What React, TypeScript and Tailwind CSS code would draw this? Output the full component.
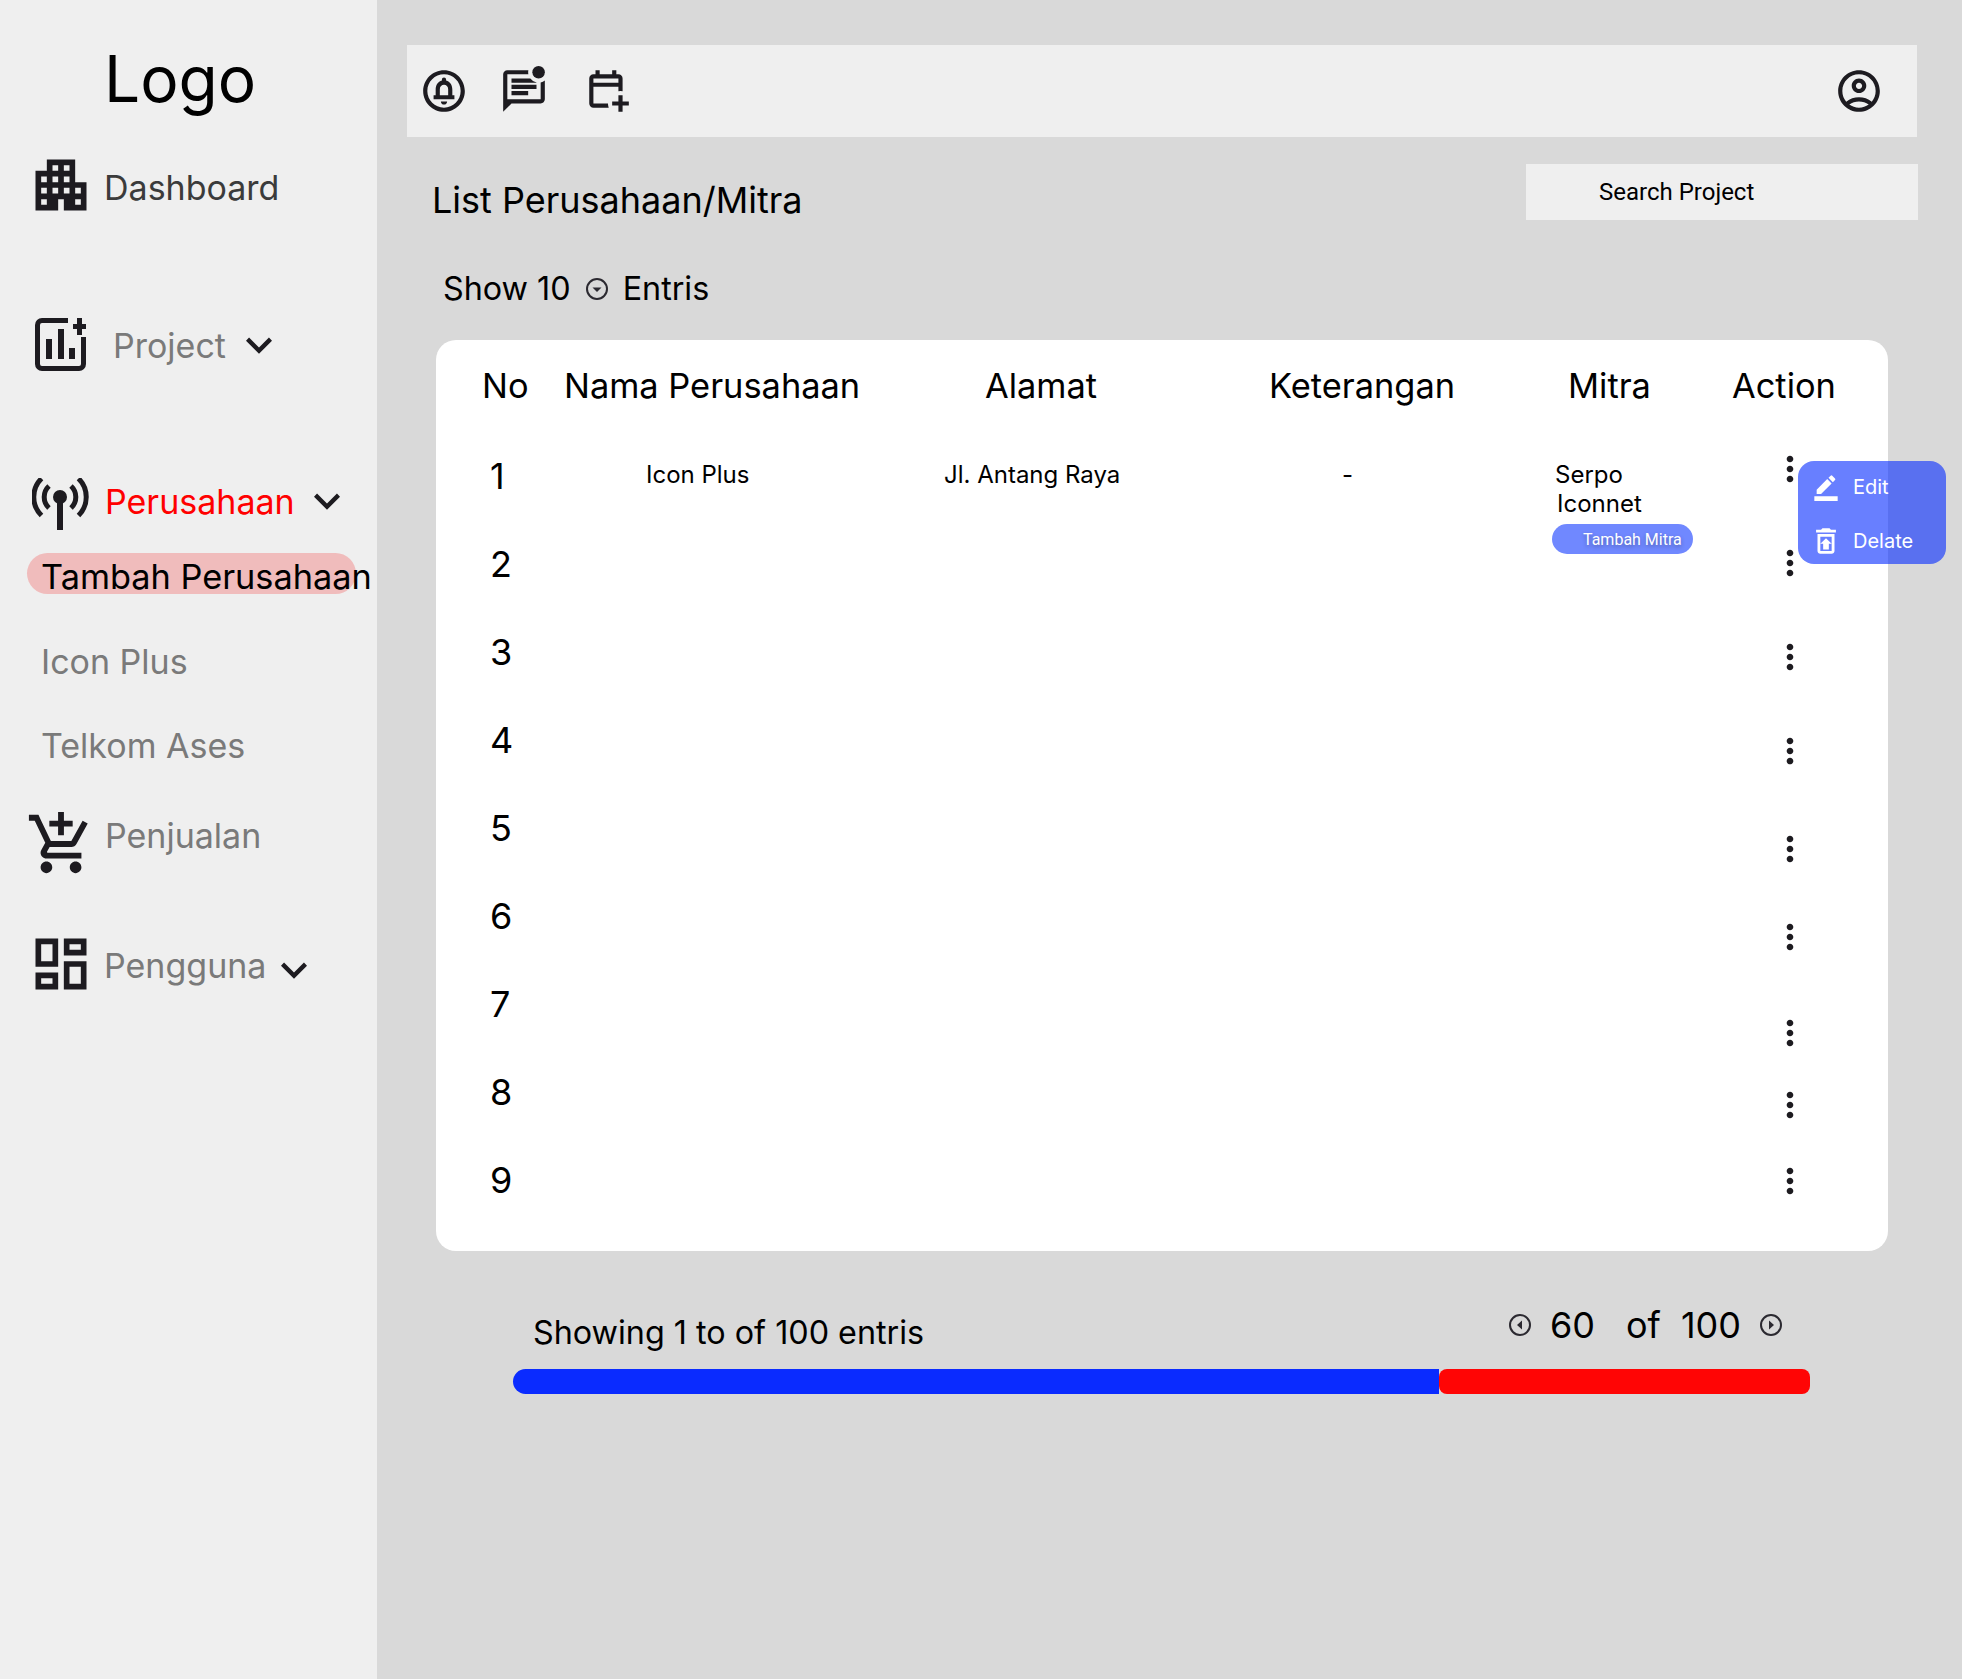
import {
  MdApartment,
  MdAddShoppingCart,
  MdOutlineDashboard,
  MdOutlineCircleNotifications,
  MdOutlineMarkUnreadChatAlt,
  MdOutlineAccountCircle,
  MdKeyboardArrowDown,
  MdMoreVert,
  MdBorderColor,
  MdOutlineRestoreFromTrash,
} from 'react-icons/md';

const actionMargins = [
  'mt-[38px]',
  'mt-[54px]',
  'mt-[54px]',
  'mt-[54px]',
  'mt-[58px]',
  'mt-[48px]',
  'mt-[56px]',
  'mt-[32px]',
  'mt-[36px]',
];

function CalendarAdd() {
  return (
    <svg viewBox="0 -960 960 960" className="w-[50px] h-[50px]" fill="#1d1b20">
      <path d="M680-80v-120H560v-80h120v-120h80v120h120v80H760v120h-80Zm-480-80q-33 0-56.5-23.5T120-240v-480q0-33 23.5-56.5T200-800h40v-80h80v80h240v-80h80v80h40q33 0 56.5 23.5T760-720v244q-20-3-40-3t-40 3v-84H200v320h280q0 20 3 40t11 40H200Zm0-480h480v-80H200v80Zm0 0v-80 80Z" />
    </svg>
  );
}

function ChartAdd() {
  return (
    <svg viewBox="0 0 51 53" className="w-[51px] h-[53px]" fill="#1d1b20">
      <path
        d="M33 2.5H7a4.5 4.5 0 0 0-4.5 4.5v39a4.5 4.5 0 0 0 4.5 4.5h37a4.5 4.5 0 0 0 4.5-4.5V19"
        fill="none"
        stroke="#1d1b20"
        strokeWidth="5"
      />
      <rect x="42" y="0" width="5" height="17" />
      <rect x="38" y="6" width="13" height="5" />
      <rect x="11" y="21" width="6" height="20" />
      <rect x="23" y="11" width="6" height="30" />
      <rect x="34" y="30" width="6" height="11" />
    </svg>
  );
}

function Antenna() {
  return (
    <svg viewBox="0 0 57 52" className="w-[57px] h-[52px]" fill="none" stroke="#1d1b20" strokeWidth="5">
      <circle cx="28" cy="19" r="7" fill="#1d1b20" stroke="none" />
      <rect x="25" y="20" width="6" height="32" fill="#1d1b20" stroke="none" />
      <path d="M17 8a15 15 0 0 0 0 22M39 8a15 15 0 0 1 0 22" />
      <path d="M9.5 0.5a26 26 0 0 0 0 37M46.5 0.5a26 26 0 0 1 0 37" />
    </svg>
  );
}

function CircleArrow({ dir }: { dir: 'down' | 'left' | 'right' }) {
  const tri = dir === 'down' ? 'M7.5 10.5h9L12 15z' : dir === 'left' ? 'M14 7.5v9L9 12z' : 'M10 7.5v9l5-4.5z';
  return (
    <svg viewBox="0 0 24 24" className="w-6 h-6 shrink-0">
      <circle cx="12" cy="12" r="10" fill="none" stroke="#2b2930" strokeWidth="2" />
      <path d={tri} fill="#2b2930" />
    </svg>
  );
}

function Sidebar() {
  return (
    <aside className="w-[377px] shrink-0 h-full bg-[#efefef] pt-[47px] font-['Inter',sans-serif] text-[34px] text-[#7a7a7a]">
      <div className="pl-[104px] h-[64px] text-[64px] leading-none text-black">Logo</div>

      <div className="mt-[40px] h-[68px] flex items-center pl-[27px]">
        <MdApartment className="w-[68px] h-[68px] text-[#1d1b20]" />
        <span className="ml-[9px] mt-1 text-[#3b3b3b]">Dashboard</span>
      </div>

      <div className="mt-[91px] h-[68px] flex items-center pl-[35px]">
        <ChartAdd />
        <span className="ml-[27px] mt-0.5">Project</span>
        <MdKeyboardArrowDown className="w-[52px] h-[52px] ml-[7px] mt-0.5 text-[#1d1b20]" />
      </div>

      <div className="mt-[92px] h-[68px] flex items-center pl-[32px]">
        <Antenna />
        <span className="ml-[16px] -mt-1.5 text-[#ff0000]">Perusahaan</span>
        <MdKeyboardArrowDown className="w-[52px] h-[52px] ml-[6px] -mt-1.5 text-[#1d1b20]" />
      </div>

      <div className="mt-[15px] ml-[27px] w-[329px] h-[41px] rounded-full bg-[#f0bcbc] pl-[14px] pt-[7px] flex items-center text-[34.3px] text-black whitespace-nowrap">
        Tambah Perusahaan
      </div>
      <div className="mt-[46px] ml-[41px] h-[44px] leading-[44px]">Icon Plus</div>
      <div className="mt-[40px] ml-[41px] h-[44px] leading-[44px]">Telkom Ases</div>

      <div className="mt-[41px] h-[70px] flex items-center pl-[26px]">
        <MdAddShoppingCart className="w-[70px] h-[70px] text-[#1d1b20]" />
        <span className="ml-[9px] -mt-[18px]">Penjualan</span>
      </div>

      <div className="mt-[51px] h-[68px] flex items-center pl-[27px]">
        <MdOutlineDashboard className="w-[68px] h-[68px] text-[#1d1b20]" />
        <span className="ml-[9px] mt-0.5">Pengguna</span>
        <MdKeyboardArrowDown className="w-[52px] h-[52px] ml-[2px] mt-3 text-[#1d1b20]" />
      </div>
    </aside>
  );
}

function ProjectTable() {
  return (
    <div className="relative ml-[59px] mt-[31px] w-[1452px] h-[911px] rounded-[20px] bg-white pt-[20px] text-black">
      <div className="grid grid-cols-[128px_421px_284px_299px_164px_156px] h-[48px] items-center text-[34.4px]">
        <span className="pl-[46px]">No</span>
        <span>Nama Perusahaan</span>
        <span>Alamat</span>
        <span>Keterangan</span>
        <span>Mitra</span>
        <span>Action</span>
      </div>

      <div className="flex mt-[3px]">
        <div className="w-[210px] mt-[21px] pl-[54px]">
          {[1, 2, 3, 4, 5, 6, 7, 8, 9].map((n) => (
            <div key={n} className="h-[88px] flex items-center text-[36px]">
              {n}
            </div>
          ))}
        </div>
        <div className="w-[298px] mt-[49px] text-[24px] leading-[29px]">Icon Plus</div>
        <div className="w-[398px] mt-[49px] text-[24px] leading-[29px]">Jl. Antang Raya</div>
        <div className="w-[213px] mt-[49px] text-[24px] leading-[29px]">-</div>
        <div className="w-[215px] mt-[49px] text-[24px] leading-[29px]">
          <div>Serpo</div>
          <div className="pl-0.5">Iconnet</div>
          <div className="mt-[6px] -ml-[3px] w-[141px] h-[30px] rounded-full bg-[#7088ff] pl-[31px] flex items-center font-['Roboto',sans-serif] text-[16px] text-white [text-shadow:0_2px_4px_rgba(0,0,0,0.3)]">
            Tambah Mitra
          </div>
        </div>
        <div className="flex flex-col">
          {actionMargins.map((m, i) => (
            <MdMoreVert key={i} className={`w-[40px] h-[40px] text-[#1d1b20] ${m}`} />
          ))}
        </div>
      </div>

      <div className="absolute left-[1362px] top-[121px] w-[148px] h-[103px] rounded-[16px] bg-[#0429ff]/60 text-white text-[20px]">
        <div className="flex items-center h-[50px] pl-[14px] pt-[2px]">
          <MdBorderColor className="w-[28px] h-[28px]" />
          <span className="ml-[13px]">Edit</span>
        </div>
        <div className="flex items-center h-[53px] pl-[11px] pt-[7px]">
          <MdOutlineRestoreFromTrash className="w-[34px] h-[34px]" />
          <span className="ml-[10px]">Delate</span>
        </div>
      </div>
    </div>
  );
}

export default function App() {
  return (
    <div className="flex w-[1962px] h-[1679px] bg-[#d9d9d9] font-['Inter',sans-serif] overflow-hidden">
      <Sidebar />
      <main className="flex-1 pt-[45px]">
        <div className="ml-[30px] w-[1510px] h-[92px] bg-[#efefef] flex items-center pl-[12px] pr-[33px] text-[#1d1b20]">
          <MdOutlineCircleNotifications className="w-[50px] h-[50px]" />
          <MdOutlineMarkUnreadChatAlt className="w-[50px] h-[50px] ml-[30px]" />
          <div className="ml-[34px]">
            <CalendarAdd />
          </div>
          <MdOutlineAccountCircle className="w-[50px] h-[50px] ml-auto" />
        </div>

        <div className="mt-[27px] ml-[55px] w-[1486px] h-[56px] flex justify-between text-black">
          <h1 className="text-[36px] leading-[44px] mt-[14px] font-normal">List Perusahaan/Mitra</h1>
          <div className="w-[392px] h-[56px] bg-[#efefef] pl-[73px] flex items-center font-['Roboto',sans-serif] text-[24px]">
            Search Project
          </div>
        </div>

        <div className="mt-[49px] ml-[66px] h-[40px] flex items-center text-[32.3px] text-black">
          <span>Show 10</span>
          <div className="ml-[14px]">
            <CircleArrow dir="down" />
          </div>
          <span className="ml-[14px]">Entris</span>
        </div>

        <ProjectTable />

        <div className="mt-[52px] ml-[156px] w-[1297px] h-[52px] flex text-black">
          <span className="text-[32.3px] mt-[6px]">Showing 1 to of 100 entris</span>
          <div className="ml-auto mr-[47px] flex items-center h-[44px] text-[36px]">
            <CircleArrow dir="left" />
            <span className="ml-[18px]">60</span>
            <span className="ml-[31px]">of</span>
            <span className="ml-[20px]">100</span>
            <div className="ml-[18px]">
              <CircleArrow dir="right" />
            </div>
          </div>
        </div>
        <div className="mt-[14px] ml-[136px] w-[1297px] h-[25px] flex">
          <div className="w-[926px] h-full bg-[#0a2bff] rounded-l-full" />
          <div className="flex-1 h-full bg-[#ff0505] rounded-[8px]" />
        </div>
      </main>
    </div>
  );
}
